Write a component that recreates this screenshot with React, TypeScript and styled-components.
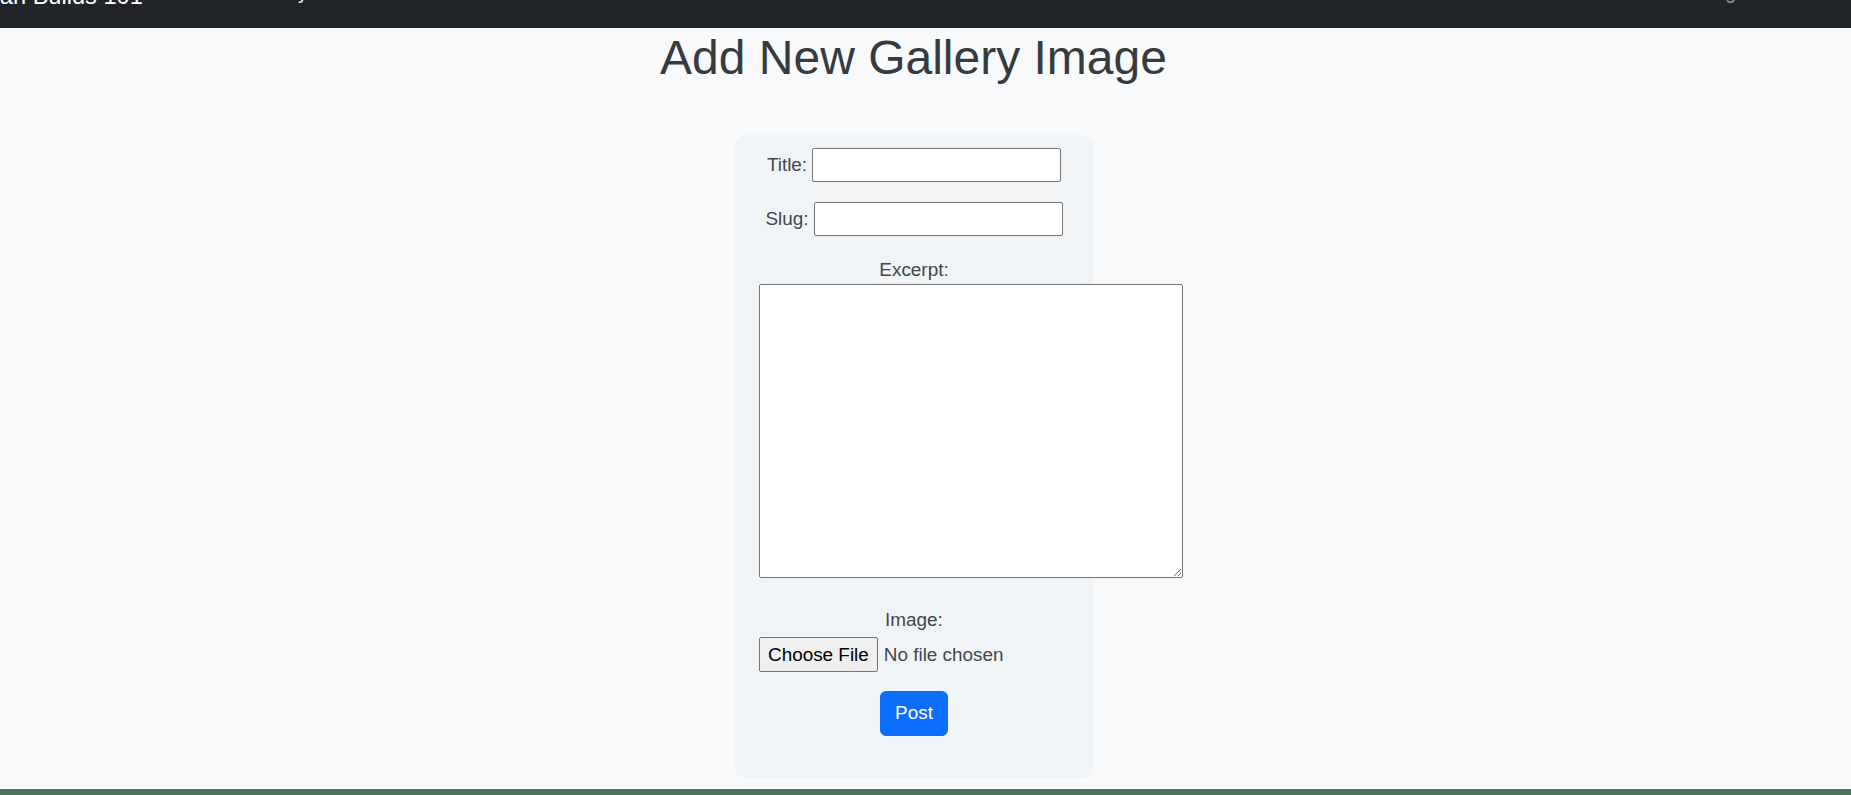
import React from "react";
import styled, { createGlobalStyle } from "styled-components";

const GlobalStyle = createGlobalStyle`
  html, body {
    margin: 0;
    padding: 0;
    background: #f8f9fa;
    overflow: hidden;
  }
  body {
    font-family: "Liberation Sans", Arial, sans-serif;
    color: #41464b;
  }
  * { box-sizing: border-box; }
`;

const Navbar = styled.nav`
  height: 28px;
  background: #212529;
  display: flex;
  align-items: flex-start;
  overflow: hidden;
`;

const Brand = styled.span`
  font-size: 23.6px;
  line-height: 1;
  margin-top: -15.5px;
  margin-left: -29px;
  color: #fff;
  white-space: nowrap;
`;

const NavLinks = styled.div`
  display: flex;
  margin-left: 26px;
`;

const NavLink = styled.span<{ $active?: boolean }>`
  font-size: 18.9px;
  line-height: 1;
  margin-top: -16px;
  padding: 0 9.5px;
  white-space: nowrap;
  color: ${(p) => (p.$active ? "#fff" : "rgba(255,255,255,0.55)")};
`;

const RightLinks = styled.div`
  margin-left: auto;
  margin-right: 91px;
  display: flex;
`;

const Main = styled.main`
  display: flex;
  flex-direction: column;
  align-items: center;
`;

const Heading = styled.h1`
  margin: 0 24px 0 0;
  font-size: 48px;
  line-height: 59px;
  font-weight: 400;
  color: #363b40;
`;

const Card = styled.form`
  width: 358px;
  margin: 48px 23px 0 0;
  padding: 13px 24px 42px;
  background: #f1f4f6;
  border-radius: 10px;
`;

const InlineRow = styled.div`
  display: flex;
  justify-content: center;
  align-items: center;
  gap: 5px;
  height: 34px;
  margin-bottom: 20px;
`;

const Label = styled.label`
  font-size: 18.9px;
  line-height: 1.15;
  color: #41464b;
`;

const BlockLabel = styled.label<{ $mt?: number }>`
  display: block;
  text-align: center;
  font-size: 18.9px;
  line-height: 28px;
  margin-top: ${(p) => p.$mt ?? 0}px;
  color: #41464b;
`;

const TextInput = styled.input`
  width: 249px;
  height: 34px;
  border: 1px solid #767676;
  border-radius: 2px;
  background: #fff;
  font-family: inherit;
  font-size: 18.9px;
  padding: 1px 2px;
`;

const TextArea = styled.textarea`
  display: block;
  width: 424px;
  height: 294px;
  margin: 0;
  border: 1px solid #767676;
  border-radius: 2px;
  background: #fff;
  font-family: inherit;
  font-size: 18.9px;
`;

const FileInput = styled.input`
  display: block;
  margin-top: 3px;
  font-family: inherit;
  font-size: 18.9px;
  color: #41464b;
  height: 35px;
  line-height: 33px;
  &::file-selector-button {
    font-family: inherit;
    font-size: 18.9px;
    color: #000;
    height: 35px;
    padding: 0 8px;
    margin: 0 6px 0 0;
    border: 1px solid #767676;
    border-radius: 2px;
    background: #efefef;
  }
`;

const PostButton = styled.button`
  display: block;
  margin: 19px auto 0;
  padding: 7.25px 14.25px;
  font-family: inherit;
  font-size: 18.9px;
  line-height: 28.5px;
  color: #fff;
  background: #0d6efd;
  border: 1px solid #0d6efd;
  border-radius: 6px;
`;

const Footer = styled.footer`
  margin-top: 11px;
  height: 10px;
  background: #4f6f5e;
`;

export default function App() {
  return (
    <>
      <GlobalStyle />
      <Navbar>
        <Brand>Ryan Builds 101</Brand>
        <NavLinks>
          <NavLink>Home</NavLink>
          <NavLink $active>Gallery</NavLink>
        </NavLinks>
        <RightLinks>
          <NavLink>Login</NavLink>
        </RightLinks>
      </Navbar>
      <Main>
        <Heading>Add New Gallery Image</Heading>
        <Card onSubmit={(e) => e.preventDefault()}>
          <InlineRow>
            <Label htmlFor="title">Title:</Label>
            <TextInput id="title" type="text" />
          </InlineRow>
          <InlineRow>
            <Label htmlFor="slug">Slug:</Label>
            <TextInput id="slug" type="text" />
          </InlineRow>
          <BlockLabel htmlFor="excerpt" $mt={2}>Excerpt:</BlockLabel>
          <TextArea id="excerpt" />
          <BlockLabel htmlFor="image" $mt={28}>Image:</BlockLabel>
          <FileInput id="image" type="file" />
          <PostButton type="submit">Post</PostButton>
        </Card>
      </Main>
      <Footer />
    </>
  );
}
